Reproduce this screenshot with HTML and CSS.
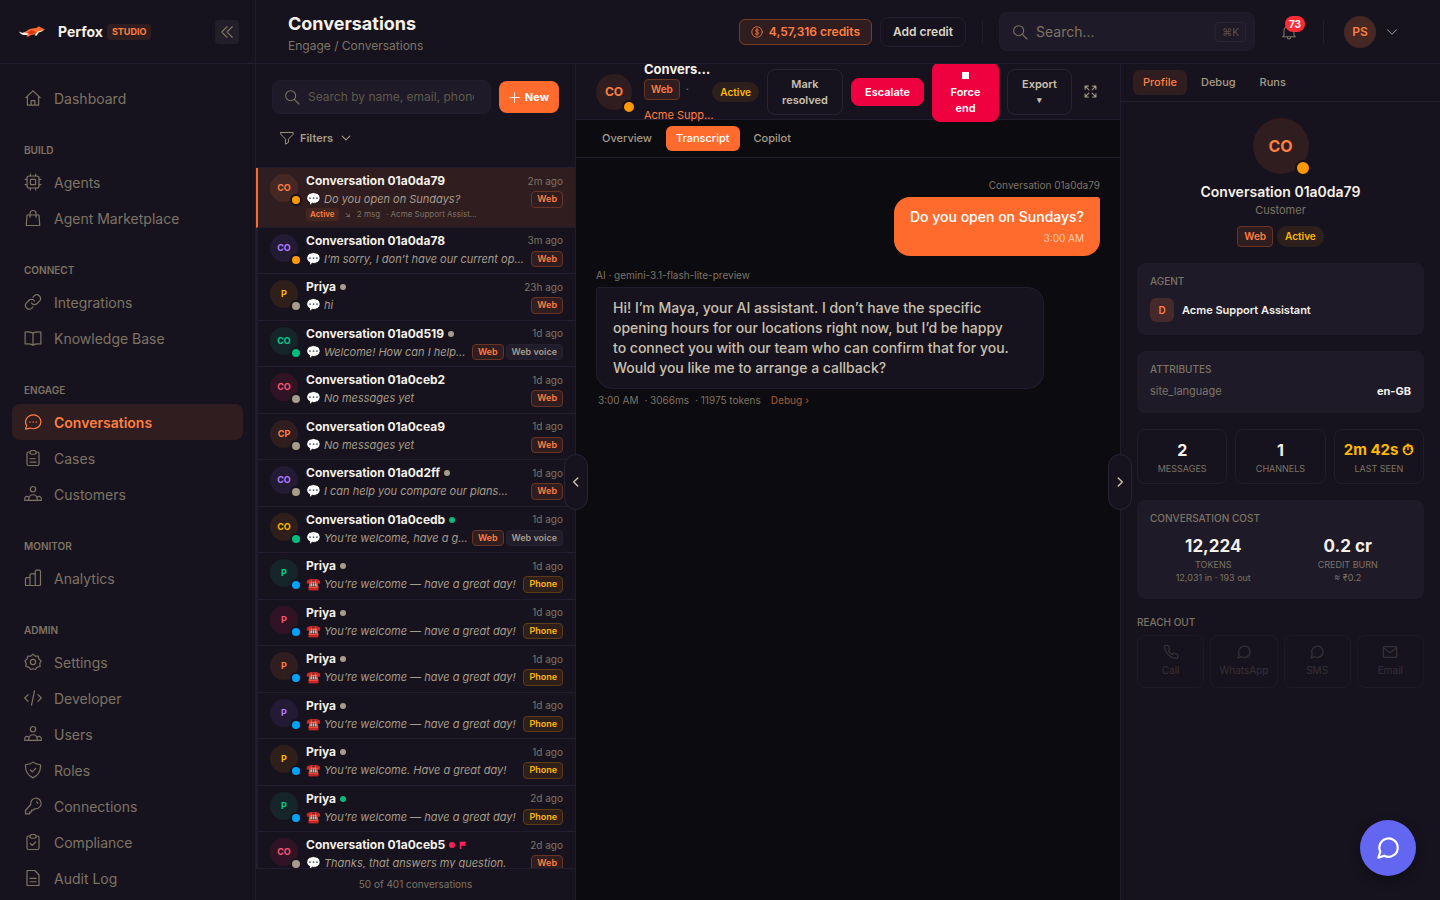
FILE: index.html
```html
<!DOCTYPE html>
<html lang="en">
<head>
    <meta charset="UTF-8">
    <meta name="viewport" content="width=device-width, initial-scale=1.0">
    <title>Conversations - Perfox Studio</title>
    <link rel="stylesheet" href="styles.css">
</head>
<body>
    <!-- Icon set -->
    <svg class="sprite" aria-hidden="true">
        <symbol id="i-home" viewBox="0 0 24 24"><path d="M2.5 11.5 12 2.5l9.500 9M4.500 10v11.500h15V10M9.500 21.500V15.500h5v6"/></symbol>
        <symbol id="i-chip" viewBox="0 0 24 24"><rect x="4" y="4" width="16" height="16" rx="3"/><rect x="8.500" y="8.500" width="7" height="7" rx="1"/><path d="M8.500 4V1.500M15.500 4V1.500M8.500 22.500V20M15.500 22.500V20M4 8.500H1.500M4 15.500H1.500M22.500 8.500H20M22.500 15.500H20"/></symbol>
        <symbol id="i-bag" viewBox="0 0 24 24"><path d="M4 8h16l1 14H3zM8 11V6a4 4 0 0 1 8 0v5"/></symbol>
        <symbol id="i-link" viewBox="0 0 24 24"><path d="M10 13.500a5 5 0 0 0 7.500.5l3.500-3.500a5 5 0 0 0-7-7L12 5.500M14 10.500a5 5 0 0 0-7.500-.5L3 13.500a5 5 0 0 0 7 7l2-2"/></symbol>
        <symbol id="i-book" viewBox="0 0 24 24"><path d="M12 5.500C9.500 4 5.500 3.500 1.500 4v16c4-.5 8 0 10.500 1.500 2.500-1.500 6.500-2 10.500-1.500V4c-4-.5-8 0-10.500 1.500zM12 5.500v16"/></symbol>
        <symbol id="i-chat-dots" viewBox="0 0 24 24"><path d="M12.500 2.500c5.500 0 10 4 10 9.300s-4.500 9.200-10 9.200c-1.500 0-2.900-.3-4.200-.9L2 21.500l1.500-4.700A9 9 0 0 1 2 11.800c0-5.300 5-9.300 10.500-9.300z"/><path d="M7.500 12h1M11.800 12h1M16 12h1"/></symbol>
        <symbol id="i-clip" viewBox="0 0 24 24"><path d="M8 4H6a2 2 0 0 0-2 2v14a2 2 0 0 0 2 2h12a2 2 0 0 0 2-2V6a2 2 0 0 0-2-2h-2M8 3.500 10 2h4l2 1.500V6l-2 1h-4L8 6zM8 13h7M8 17.500h8"/></symbol>
        <symbol id="i-clip-check" viewBox="0 0 24 24"><path d="M8 4H6a2 2 0 0 0-2 2v14a2 2 0 0 0 2 2h12a2 2 0 0 0 2-2V6a2 2 0 0 0-2-2h-2M8 3.500 10 2h4l2 1.500V6l-2 1h-4L8 6zM8.500 14l2.500 2.500 4.500-4.500"/></symbol>
        <symbol id="i-users" viewBox="0 0 24 24"><circle cx="12" cy="5.500" r="3.500"/><path d="M6.500 20.500v-2a5.500 5.500 0 0 1 11 0v2M1 20.500h22v-2.500a3 3 0 0 0-5.800-1M1 20.500V18a3 3 0 0 1 5.800-1"/></symbol>
        <symbol id="i-bars" viewBox="0 0 24 24"><path d="M2 22V12.500l1-1h5V22zM8 22V7.500l1-1h6V22zM15 22V3l1-1.500h5l1 1.500v18l-1 1z"/></symbol>
        <symbol id="i-gear" viewBox="0 0 24 24"><path d="m12 1.500 3 2.700 4-.2.800 4 3 2.500-1.800 3.500.5 4-4 .8L15 22l-3-1-3 1-2.500-3.200-4-.8.500-4L1.200 10.500l3-2.500.8-4 4 .2z"/><circle cx="12" cy="12" r="3.500"/></symbol>
        <symbol id="i-code" viewBox="0 0 24 24"><path d="m5.500 7.500-4.500 4.500 4.500 4.500M18.500 7.500 23 12l-4.500 4.500M14 2.500l-4 19"/></symbol>
        <symbol id="i-shield" viewBox="0 0 24 24"><path d="M12 1.500c3 2.300 6 3.300 10 3.500.5 8-2.500 14-10 17.500C4.500 19 1.500 13 2 5c4-.2 7-1.200 10-3.500zM8.500 12l2.500 2.500 4.500-4.500"/></symbol>
        <symbol id="i-key" viewBox="0 0 24 24"><path d="M9 10a7 7 0 1 1 5.500 5.500L12.500 17.500h-2.500V20H7.500v2.500H2V18zM16.500 6.500c1.200.2 1.800.8 2 2"/></symbol>
        <symbol id="i-doc" viewBox="0 0 24 24"><path d="M4 2h10.500l5.500 6v14H4zM8 12.500h8M8 17h8"/></symbol>
        <symbol id="i-collapse" viewBox="0 0 24 24"><path d="m12 3-9 9 9 9M21 3l-9 9 9 9"/></symbol>
        <symbol id="i-search" viewBox="0 0 24 24"><circle cx="10" cy="10" r="7.500"/><path d="m15.500 15.500 7 7"/></symbol>
        <symbol id="i-filter" viewBox="0 0 24 24"><path d="M1.500 2.500h21v3L14.500 14v5.500l-5 3V14L1.500 5.500z"/></symbol>
        <symbol id="i-down" viewBox="0 0 24 24"><path d="m3 7.500 9 9 9-9"/></symbol>
        <symbol id="i-left" viewBox="0 0 24 24"><path d="m15 5-7 7 7 7"/></symbol>
        <symbol id="i-right" viewBox="0 0 24 24"><path d="m9 5 7 7-7 7"/></symbol>
        <symbol id="i-plus" viewBox="0 0 24 24"><path d="M12 1.500v21M1.500 12h21"/></symbol>
        <symbol id="i-coin" viewBox="0 0 24 24"><circle cx="12" cy="12" r="10.500"/><path d="M15.500 8.500c-1-1.500-6.500-2-6.500 1s6.500 2 6.500 5-5.500 2.500-7 1M12 5v14"/></symbol>
        <symbol id="i-bell" viewBox="0 0 24 24"><path d="M4.500 17.500V10a7.500 7.500 0 0 1 15 0v7.500l2 1.500h-19zM9.500 19.500c0 4 5 4 5 0"/></symbol>
        <symbol id="i-expand" viewBox="0 0 24 24"><path d="M2 8V2h6M2 2l7 7M16 2h6v6M22 2l-7 7M2 16v6h6M2 22l7-7M22 16v6h-6M22 22l-7-7"/></symbol>
        <symbol id="i-chat" viewBox="0 0 24 24"><path d="M21 11.500a8.500 8.500 0 0 1-12.500 7.600L3 21l1.900-5.500A8.500 8.500 0 1 1 21 11.500z"/></symbol>
        <symbol id="i-phone" viewBox="0 0 24 24"><path d="M22 16.900v3a2 2 0 0 1-2.200 2A19.800 19.800 0 0 1 2.100 4.200 2 2 0 0 1 4.100 2h3a2 2 0 0 1 2 1.700c.1 1 .4 1.900.7 2.800a2 2 0 0 1-.5 2.100L8.100 9.900a16 16 0 0 0 6 6l1.300-1.300a2 2 0 0 1 2.100-.4c.9.300 1.800.6 2.800.7a2 2 0 0 1 1.700 2z"/></symbol>
        <symbol id="i-mail" viewBox="0 0 24 24"><rect x="2" y="4" width="20" height="16" rx="2"/><path d="m2.500 6 9.500 7 9.500-7"/></symbol>
        <symbol id="i-flag" viewBox="0 0 10 10"><path d="M1 1h8L7.500 3.500 9 6H3v4H1z" fill="currentColor" stroke="none"/></symbol>
    </svg>

    <div class="app">
        <aside class="sidebar">
            <div class="brand">
                <svg class="logo" viewBox="0 0 26 10" aria-hidden="true">
                    <path d="M0 5c2 1.500 4 1.300 6 .4L9 4l3 2-3 2.200C5 9 1 8 0 5z" fill="#f3ece2"/>
                    <path d="M5 6c3-1 4-3.500 8-3.800 3 0 5-1 6-2.200l1.500 1L25 3l-2.500 1.300L19 5c-2 2-3 2.500-5 3l-3 .500L9 10l-2-.5L9 7z" fill="#ff6b2c"/>
                    <path d="m8 6 4-2.500L17 6l-6 2z" fill="#d63a16"/>
                    <path d="m18 5 6-1.500L22 5l-3 1-2 3-2-.5z" fill="#f3ece2"/>
                </svg>
                <span class="brand-name">Perfox</span>
                <span class="brand-badge">STUDIO</span>
                <button class="collapse" aria-label="Collapse sidebar"><svg class="icon"><use href="#i-collapse"/></svg></button>
            </div>
            <nav class="nav">
                <a href="#" class="nav-item"><svg class="icon"><use href="#i-home"/></svg>Dashboard</a>
                <h2 class="nav-label">Build</h2>
                <a href="#" class="nav-item"><svg class="icon"><use href="#i-chip"/></svg>Agents</a>
                <a href="#" class="nav-item"><svg class="icon"><use href="#i-bag"/></svg>Agent Marketplace</a>
                <h2 class="nav-label">Connect</h2>
                <a href="#" class="nav-item"><svg class="icon"><use href="#i-link"/></svg>Integrations</a>
                <a href="#" class="nav-item"><svg class="icon"><use href="#i-book"/></svg>Knowledge Base</a>
                <h2 class="nav-label">Engage</h2>
                <a href="#" class="nav-item active"><svg class="icon"><use href="#i-chat-dots"/></svg>Conversations</a>
                <a href="#" class="nav-item"><svg class="icon"><use href="#i-clip"/></svg>Cases</a>
                <a href="#" class="nav-item"><svg class="icon"><use href="#i-users"/></svg>Customers</a>
                <h2 class="nav-label">Monitor</h2>
                <a href="#" class="nav-item"><svg class="icon"><use href="#i-bars"/></svg>Analytics</a>
                <h2 class="nav-label">Admin</h2>
                <a href="#" class="nav-item"><svg class="icon"><use href="#i-gear"/></svg>Settings</a>
                <a href="#" class="nav-item"><svg class="icon"><use href="#i-code"/></svg>Developer</a>
                <a href="#" class="nav-item"><svg class="icon"><use href="#i-users"/></svg>Users</a>
                <a href="#" class="nav-item"><svg class="icon"><use href="#i-shield"/></svg>Roles</a>
                <a href="#" class="nav-item"><svg class="icon"><use href="#i-key"/></svg>Connections</a>
                <a href="#" class="nav-item"><svg class="icon"><use href="#i-clip-check"/></svg>Compliance</a>
                <a href="#" class="nav-item"><svg class="icon"><use href="#i-doc"/></svg>Audit Log</a>
            </nav>
        </aside>

        <div class="main">
            <header class="topbar">
                <div class="page-title">
                    <h1>Conversations</h1>
                    <p>Engage / Conversations</p>
                </div>
                <a href="#" class="credits"><svg class="icon"><use href="#i-coin"/></svg>4,57,316 credits</a>
                <button class="add-credit">Add credit</button>
                <span class="divider"></span>
                <label class="top-search">
                    <svg class="icon"><use href="#i-search"/></svg>
                    <input type="text" placeholder="Search..." aria-label="Search">
                    <kbd>⌘K</kbd>
                </label>
                <button class="bell" aria-label="Notifications"><svg class="icon"><use href="#i-bell"/></svg><span class="bell-count">73</span></button>
                <span class="divider"></span>
                <button class="account" aria-label="Account"><span class="account-avatar">PS</span><svg class="icon"><use href="#i-down"/></svg></button>
            </header>

            <div class="workspace">
                <!-- Conversation list -->
                <section class="list-panel">
                    <div class="list-tools">
                        <label class="list-search">
                            <svg class="icon"><use href="#i-search"/></svg>
                            <input type="text" placeholder="Search by name, email, phone" aria-label="Search conversations">
                        </label>
                        <button class="new-btn"><svg class="icon"><use href="#i-plus"/></svg>New</button>
                    </div>
                    <button class="filters"><svg class="icon"><use href="#i-filter"/></svg>Filters<svg class="icon small"><use href="#i-down"/></svg></button>

                    <div class="conv-list">
                        <article class="conv selected">
                            <div class="avatar orange">CO<i class="status amber"></i></div>
                            <div class="conv-body">
                                <div class="conv-top"><b>Conversation 01a0da79</b><time>2m ago</time></div>
                                <div class="conv-bottom"><span class="emoji">💬</span><em>Do you open on Sundays?</em><span class="tag">Web</span></div>
                                <div class="conv-meta"><span class="mini-tag">Active</span><span>↘</span><span>2 msg</span><span>· Acme Support Assist…</span></div>
                            </div>
                        </article>
                        <article class="conv">
                            <div class="avatar purple">CO<i class="status amber"></i></div>
                            <div class="conv-body">
                                <div class="conv-top"><b>Conversation 01a0da78</b><time>3m ago</time></div>
                                <div class="conv-bottom"><span class="emoji">💬</span><em>I’m sorry, I don’t have our current op…</em><span class="tag">Web</span></div>
                            </div>
                        </article>
                        <article class="conv">
                            <div class="avatar yellow">P<i class="status gray"></i></div>
                            <div class="conv-body">
                                <div class="conv-top"><b>Priya</b><i class="dot gray"></i><time>23h ago</time></div>
                                <div class="conv-bottom"><span class="emoji">💬</span><em>hi</em><span class="tag">Web</span></div>
                            </div>
                        </article>
                        <article class="conv">
                            <div class="avatar green">CO<i class="status emerald"></i></div>
                            <div class="conv-body">
                                <div class="conv-top"><b>Conversation 01a0d519</b><i class="dot gray"></i><time>1d ago</time></div>
                                <div class="conv-bottom"><span class="emoji">💬</span><em>Welcome! How can I help…</em><span class="tag">Web</span><span class="tag voice">Web voice</span></div>
                            </div>
                        </article>
                        <article class="conv">
                            <div class="avatar rose">CO<i class="status gray"></i></div>
                            <div class="conv-body">
                                <div class="conv-top"><b>Conversation 01a0ceb2</b><time>1d ago</time></div>
                                <div class="conv-bottom"><span class="emoji">💬</span><em>No messages yet</em><span class="tag">Web</span></div>
                            </div>
                        </article>
                        <article class="conv">
                            <div class="avatar orange">CP<i class="status gray"></i></div>
                            <div class="conv-body">
                                <div class="conv-top"><b>Conversation 01a0cea9</b><time>1d ago</time></div>
                                <div class="conv-bottom"><span class="emoji">💬</span><em>No messages yet</em><span class="tag">Web</span></div>
                            </div>
                        </article>
                        <article class="conv">
                            <div class="avatar purple">CO<i class="status gray"></i></div>
                            <div class="conv-body">
                                <div class="conv-top"><b>Conversation 01a0d2ff</b><i class="dot gray"></i><time>1d ago</time></div>
                                <div class="conv-bottom"><span class="emoji">💬</span><em>I can help you compare our plans…</em><span class="tag">Web</span></div>
                            </div>
                        </article>
                        <article class="conv">
                            <div class="avatar yellow">CO<i class="status emerald"></i></div>
                            <div class="conv-body">
                                <div class="conv-top"><b>Conversation 01a0cedb</b><i class="dot emerald"></i><time>1d ago</time></div>
                                <div class="conv-bottom"><span class="emoji">💬</span><em>You’re welcome, have a g…</em><span class="tag">Web</span><span class="tag voice">Web voice</span></div>
                            </div>
                        </article>
                        <article class="conv">
                            <div class="avatar green">P<i class="status blue"></i></div>
                            <div class="conv-body">
                                <div class="conv-top"><b>Priya</b><i class="dot gray"></i><time>1d ago</time></div>
                                <div class="conv-bottom"><span class="emoji">☎️</span><em>You’re welcome — have a great day!</em><span class="tag phone">Phone</span></div>
                            </div>
                        </article>
                        <article class="conv">
                            <div class="avatar rose">P<i class="status blue"></i></div>
                            <div class="conv-body">
                                <div class="conv-top"><b>Priya</b><i class="dot gray"></i><time>1d ago</time></div>
                                <div class="conv-bottom"><span class="emoji">☎️</span><em>You’re welcome — have a great day!</em><span class="tag phone">Phone</span></div>
                            </div>
                        </article>
                        <article class="conv">
                            <div class="avatar orange">P<i class="status blue"></i></div>
                            <div class="conv-body">
                                <div class="conv-top"><b>Priya</b><i class="dot gray"></i><time>1d ago</time></div>
                                <div class="conv-bottom"><span class="emoji">☎️</span><em>You’re welcome — have a great day!</em><span class="tag phone">Phone</span></div>
                            </div>
                        </article>
                        <article class="conv">
                            <div class="avatar purple">P<i class="status blue"></i></div>
                            <div class="conv-body">
                                <div class="conv-top"><b>Priya</b><i class="dot gray"></i><time>1d ago</time></div>
                                <div class="conv-bottom"><span class="emoji">☎️</span><em>You’re welcome — have a great day!</em><span class="tag phone">Phone</span></div>
                            </div>
                        </article>
                        <article class="conv">
                            <div class="avatar yellow">P<i class="status blue"></i></div>
                            <div class="conv-body">
                                <div class="conv-top"><b>Priya</b><i class="dot gray"></i><time>1d ago</time></div>
                                <div class="conv-bottom"><span class="emoji">☎️</span><em>You’re welcome. Have a great day!</em><span class="tag phone">Phone</span></div>
                            </div>
                        </article>
                        <article class="conv">
                            <div class="avatar green">P<i class="status blue"></i></div>
                            <div class="conv-body">
                                <div class="conv-top"><b>Priya</b><i class="dot emerald"></i><time>2d ago</time></div>
                                <div class="conv-bottom"><span class="emoji">☎️</span><em>You’re welcome — have a great day!</em><span class="tag phone">Phone</span></div>
                            </div>
                        </article>
                        <article class="conv">
                            <div class="avatar rose">CO<i class="status gray"></i></div>
                            <div class="conv-body">
                                <div class="conv-top"><b>Conversation 01a0ceb5</b><i class="dot red"></i><svg class="flag"><use href="#i-flag"/></svg><time>2d ago</time></div>
                                <div class="conv-bottom"><span class="emoji">💬</span><em>Thanks, that answers my question.</em><span class="tag">Web</span></div>
                            </div>
                        </article>
                    </div>
                    <p class="list-count">50 of 401 conversations</p>
                    <button class="handle" aria-label="Hide list"><svg class="icon"><use href="#i-left"/></svg></button>
                </section>

                <!-- Chat -->
                <section class="chat">
                    <div class="chat-head">
                        <div class="avatar orange large">CO<i class="status amber"></i></div>
                        <div class="chat-who">
                            <b>Convers…</b>
                            <div class="chat-sub"><span class="tag big">Web</span><span class="sep">·</span><a href="#">Acme Supp…</a></div>
                        </div>
                        <span class="pill">Active</span>
                        <button class="btn resolve">Mark resolved</button>
                        <button class="btn danger">Escalate</button>
                        <button class="btn danger force"><span class="stop"></span>Force end</button>
                        <button class="btn export">Export <small>▾</small></button>
                        <button class="expand" aria-label="Full screen"><svg class="icon"><use href="#i-expand"/></svg></button>
                    </div>
                    <div class="tabs chat-tabs">
                        <button>Overview</button>
                        <button class="on">Transcript</button>
                        <button>Copilot</button>
                    </div>
                    <div class="messages">
                        <p class="msg-label right">Conversation 01a0da79</p>
                        <div class="bubble user">
                            <p>Do you open on Sundays?</p>
                            <time>3:00 AM</time>
                        </div>
                        <p class="msg-label next">AI · gemini-3.1-flash-lite-preview</p>
                        <div class="bubble ai">
                            <p>Hi! I’m Maya, your AI assistant. I don’t have the specific<br>opening hours for our locations right now, but I’d be happy<br>to connect you with our team who can confirm that for you.<br>Would you like me to arrange a callback?</p>
                        </div>
                        <div class="msg-meta"><span>3:00 AM</span><span>· 3066ms</span><span>· 11975 tokens</span><a href="#">Debug ›</a></div>
                    </div>
                </section>

                <!-- Customer details -->
                <aside class="details">
                    <button class="handle" aria-label="Hide details"><svg class="icon"><use href="#i-right"/></svg></button>
                    <div class="tabs detail-tabs">
                        <button class="on">Profile</button>
                        <button>Debug</button>
                        <button>Runs</button>
                    </div>
                    <div class="details-body">
                        <div class="profile">
                            <div class="avatar orange huge">CO<i class="status amber"></i></div>
                            <h3>Conversation 01a0da79</h3>
                            <p>Customer</p>
                            <div class="profile-tags"><span class="tag big">Web</span><span class="pill">Active</span></div>
                        </div>
                        <div class="card">
                            <h4>Agent</h4>
                            <div class="agent"><span class="agent-icon">D</span>Acme Support Assistant</div>
                        </div>
                        <div class="card">
                            <h4>Attributes</h4>
                            <div class="attribute"><span>site_language</span><b>en-GB</b></div>
                        </div>
                        <div class="stats">
                            <div class="stat"><b>2</b><span>Messages</span></div>
                            <div class="stat"><b>1</b><span>Channels</span></div>
                            <div class="stat"><b class="warn">2m 42s ⏱</b><span>Last seen</span></div>
                        </div>
                        <div class="card">
                            <h4>Conversation cost</h4>
                            <div class="costs">
                                <div class="cost"><b>12,224</b><span>TOKENS</span><span>12,031 in · 193 out</span></div>
                                <div class="cost"><b>0.2 cr</b><span>CREDIT BURN</span><span>≈ ₹0.2</span></div>
                            </div>
                        </div>
                        <div>
                            <h4>Reach out</h4>
                            <div class="reach">
                                <button disabled><svg class="icon"><use href="#i-phone"/></svg>Call</button>
                                <button disabled><svg class="icon"><use href="#i-chat"/></svg>WhatsApp</button>
                                <button disabled><svg class="icon"><use href="#i-chat"/></svg>SMS</button>
                                <button disabled><svg class="icon"><use href="#i-mail"/></svg>Email</button>
                            </div>
                        </div>
                    </div>
                </aside>
            </div>
        </div>
    </div>
    <button class="fab" aria-label="Open chat"><svg class="icon"><use href="#i-chat"/></svg></button>
</body>
</html>
```

FILE: styles.css
```css
:root {
    --bg: #0c0b10;
    --panel: #17131e;
    --card: #1e1a28;
    --line: #221d2e;
    --text: #f5f1e8;
    --soft: #c9c0ae;
    --mid: #a69c8a;
    --muted: #7d7464;
    --orange: #ff6b2c;
    --orange-text: #ff7f40;
    --orange-bg: #2f1d20;
    --amber: #ff9900;
    --yellow: #ffb900;
    --red: #ef003f;
}
* {
    box-sizing: border-box;
    margin: 0;
    padding: 0;
}
body {
    font-family: Inter, "Noto Sans", sans-serif;
    font-size: 14px;
    line-height: 1.5;
    background: var(--bg);
    color: var(--text);
    overflow: hidden;
}
button, input {
    font: inherit;
    color: inherit;
    border: 0;
    background: none;
}
button {
    cursor: pointer;
}
a {
    color: inherit;
    text-decoration: none;
}
input {
    min-width: 0;
    flex: 1;
    outline: none;
}
.sprite {
    display: none;
}
.icon {
    width: 16px;
    height: 16px;
    flex-shrink: 0;
    fill: none;
    stroke: currentColor;
    stroke-width: 1.6;
    stroke-linecap: round;
    stroke-linejoin: round;
}
.app {
    display: flex;
    height: 100vh;
}

/* Sidebar */
.sidebar {
    width: 256px;
    flex-shrink: 0;
    display: flex;
    flex-direction: column;
    background: var(--panel);
    border-right: 1px solid var(--line);
}
.brand {
    height: 64px;
    flex-shrink: 0;
    display: flex;
    align-items: center;
    padding: 0 16px 0 19px;
    border-bottom: 1px solid var(--line);
}
.logo {
    width: 27px;
    height: 11px;
    margin-right: 12px;
}
.brand-name {
    font-size: 14px;
    font-weight: 700;
}
.brand-badge {
    margin-left: 4px;
    padding: 0 5px;
    font-size: 9px;
    line-height: 16px;
    font-weight: 700;
    color: var(--orange-text);
    background: var(--orange-bg);
    border-radius: 4px;
}
.collapse {
    width: 24px;
    height: 24px;
    margin-left: auto;
    display: grid;
    place-items: center;
    color: var(--muted);
    background: #221e2a;
    border-radius: 4px;
}
.collapse .icon {
    width: 14px;
    height: 14px;
    stroke-width: 2;
}
.nav {
    padding: 16px 12px;
    overflow: hidden;
}
.nav-item {
    display: flex;
    align-items: center;
    gap: 12px;
    height: 36px;
    padding: 0 12px;
    color: var(--muted);
    border-radius: 8px;
}
.nav-item .icon {
    width: 18px;
    height: 18px;
}
.nav-item.active {
    color: var(--orange-text);
    background: var(--orange-bg);
    font-weight: 600;
}
.nav-label {
    margin: 24px 12px 4px;
    font-size: 10px;
    line-height: 20px;
    font-weight: 600;
    text-transform: uppercase;
    color: var(--muted);
}

/* Top bar */
.main {
    flex: 1;
    min-width: 0;
    display: flex;
    flex-direction: column;
}
.topbar {
    height: 64px;
    flex-shrink: 0;
    display: flex;
    align-items: center;
    padding: 0 42px 0 32px;
    background: var(--panel);
    border-bottom: 1px solid var(--line);
}
.page-title {
    margin-right: auto;
    padding-top: 4px;
}
.page-title h1 {
    font-size: 18px;
    line-height: 24px;
    font-weight: 700;
}
.page-title p {
    font-size: 12px;
    line-height: 20px;
    color: var(--muted);
}
.credits {
    display: flex;
    align-items: center;
    gap: 6px;
    height: 26px;
    padding: 0 11px;
    margin-right: 8px;
    font-size: 12px;
    font-weight: 600;
    color: var(--orange-text);
    background: var(--orange-bg);
    border: 1px solid #7a3c24;
    border-radius: 6px;
}
.credits .icon {
    width: 12px;
    height: 12px;
}
.add-credit {
    height: 30px;
    padding: 0 12px;
    font-size: 12px;
    font-weight: 600;
    color: #ddd5c6;
    border: 1px solid var(--line);
    border-radius: 8px;
}
.divider {
    width: 1px;
    height: 24px;
    margin: 0 16px;
    background: var(--line);
}
.top-search {
    width: 256px;
    height: 39px;
    display: flex;
    align-items: center;
    gap: 8px;
    padding: 0 8px 0 12px;
    background: var(--card);
    border: 1px solid var(--line);
    border-radius: 8px;
    color: var(--muted);
}
.top-search input::placeholder {
    color: var(--muted);
}
.top-search kbd {
    padding: 0 6px;
    font-family: inherit;
    font-size: 10px;
    line-height: 18px;
    color: #5a5348;
    border: 1px solid #2a2436;
    border-radius: 4px;
}
.bell {
    position: relative;
    width: 36px;
    height: 36px;
    margin-left: 16px;
    display: grid;
    place-items: center;
    color: var(--muted);
}
.bell-count {
    position: absolute;
    top: 2px;
    right: 2px;
    padding: 0 4px;
    font-size: 10px;
    line-height: 16px;
    font-weight: 700;
    color: #fff;
    background: #fb2c36;
    border-radius: 8px;
}
.account {
    display: flex;
    align-items: center;
    gap: 10px;
    margin-left: 4px;
    color: var(--mid);
}
.account .icon {
    width: 12px;
    height: 12px;
    stroke-width: 2;
}
.account-avatar {
    width: 32px;
    height: 32px;
    font-size: 12px;
    line-height: 32px;
    font-weight: 600;
    text-align: center;
    color: var(--orange-text);
    background: #452823;
    border-radius: 50%;
}

/* Shared bits */
.workspace {
    flex: 1;
    min-height: 0;
    display: grid;
    grid-template-columns: 320px minmax(0, 1fr) 320px;
}
.avatar {
    position: relative;
    width: 28px;
    height: 28px;
    flex-shrink: 0;
    display: grid;
    place-items: center;
    font-size: 9px;
    font-weight: 700;
    border-radius: 50%;
}
.avatar.orange { color: var(--orange-text); background: var(--orange-bg); }
.avatar.purple { color: #b57bff; background: #231a34; }
.avatar.yellow { color: var(--yellow); background: #2f1f1b; }
.avatar.green { color: #00cf8f; background: #152529; }
.avatar.rose { color: #ff5577; background: #301424; }
.status {
    position: absolute;
    right: -4px;
    bottom: -4px;
    width: 12px;
    height: 12px;
    border: 2px solid var(--panel);
    border-radius: 50%;
}
.dot {
    width: 6px;
    height: 6px;
    flex-shrink: 0;
    border-radius: 50%;
}
.status.amber { background: var(--amber); }
.status.gray, .dot.gray { background: var(--mid); }
.status.emerald, .dot.emerald { background: #00bc7d; }
.status.blue { background: #00a2ff; }
.dot.red { background: #ff2056; }
.avatar.large {
    width: 36px;
    height: 36px;
    font-size: 12px;
}
.avatar.large .status {
    width: 14px;
    height: 14px;
}
.avatar.huge {
    width: 56px;
    height: 56px;
    font-size: 16px;
}
.avatar.huge .status {
    right: -2px;
    bottom: -2px;
    width: 16px;
    height: 16px;
}
.tag {
    flex-shrink: 0;
    padding: 0 5px;
    font-size: 9px;
    line-height: 14px;
    font-weight: 600;
    color: var(--orange-text);
    background: var(--orange-bg);
    border: 1px solid #693423;
    border-radius: 4px;
}
.tag.voice {
    color: var(--mid);
    background: #211d2a;
    border-color: #262131;
}
.tag.phone {
    color: var(--yellow);
    background: #2f1f1b;
    border-color: #5e3b15;
}
.tag.big {
    padding: 0 6px;
    font-size: 10px;
    line-height: 19px;
}
.pill {
    flex-shrink: 0;
    padding: 0 8px;
    font-size: 10px;
    line-height: 20px;
    font-weight: 600;
    color: var(--yellow);
    background: #2d1f1b;
    border-radius: 10px;
}
.tabs {
    display: flex;
    align-items: center;
    gap: 4px;
    height: 38px;
    border-bottom: 1px solid var(--line);
}
.tabs button {
    height: 25px;
    padding: 0 10px;
    font-size: 11px;
    font-weight: 500;
    color: var(--mid);
    border-radius: 6px;
}
.handle {
    position: absolute;
    top: 390px;
    z-index: 2;
    width: 24px;
    height: 56px;
    display: grid;
    place-items: center;
    color: var(--soft);
    background: var(--panel);
    border: 1px solid #282236;
    border-radius: 12px;
}
.handle .icon {
    width: 14px;
    height: 14px;
    stroke-width: 2.5;
}

/* Conversation list */
.list-panel {
    position: relative;
    min-height: 0;
    display: flex;
    flex-direction: column;
    background: var(--panel);
    border-right: 1px solid var(--line);
}
.list-panel .handle {
    right: -13px;
}
.list-tools {
    display: flex;
    align-items: center;
    gap: 8px;
    padding: 16px 16px 0;
}
.list-search {
    flex: 1;
    min-width: 0;
    height: 34px;
    display: flex;
    align-items: center;
    gap: 8px;
    padding: 0 16px 0 11px;
    font-size: 12px;
    color: var(--muted);
    background: var(--card);
    border: 1px solid var(--line);
    border-radius: 8px;
}
.list-search input::placeholder {
    color: #5f584c;
}
.new-btn {
    height: 32px;
    display: flex;
    align-items: center;
    gap: 5px;
    padding: 0 10px;
    font-size: 11px;
    font-weight: 700;
    color: #fff;
    background: var(--orange);
    border-radius: 8px;
}
.new-btn .icon {
    width: 11px;
    height: 11px;
    stroke-width: 2;
}
.filters {
    align-self: flex-start;
    display: flex;
    align-items: center;
    gap: 6px;
    height: 24px;
    margin: 12px 24px 17px;
    font-size: 11px;
    font-weight: 600;
    color: var(--mid);
}
.filters .icon {
    width: 14px;
    height: 14px;
}
.filters .icon.small {
    width: 10px;
    height: 10px;
    margin-left: 2px;
    stroke-width: 2.5;
}
.conv-list {
    flex: 1;
    min-height: 0;
    overflow: hidden;
    border-top: 1px solid var(--line);
}
.conv {
    display: flex;
    gap: 8px;
    padding: 4px 12px 6px;
    border-left: 2px solid var(--line);
    border-bottom: 1px solid var(--line);
}
.conv.selected {
    background: var(--orange-bg);
    border-left-color: var(--orange);
}
.conv.selected .avatar {
    background: #452823;
}
.conv .avatar {
    margin-top: 2px;
}
.conv-body {
    flex: 1;
    min-width: 0;
}
.conv-top {
    display: flex;
    align-items: center;
    gap: 4px;
    font-size: 12px;
}
.conv-top time {
    margin-left: auto;
    font-size: 10px;
    line-height: 15px;
    color: var(--muted);
}
.flag {
    width: 8px;
    height: 8px;
    color: #ff2056;
}
.conv-bottom {
    display: flex;
    gap: 2px;
    margin-top: 1px;
    font-size: 11px;
}
.conv-bottom em {
    flex: 1;
    min-width: 0;
    overflow: hidden;
    white-space: nowrap;
    text-overflow: ellipsis;
    color: var(--mid);
}
.emoji {
    width: 16px;
    flex-shrink: 0;
    font-size: 12px;
    line-height: 16px;
}
.conv-meta {
    display: flex;
    gap: 6px;
    font-size: 8px;
    line-height: 13px;
    color: var(--muted);
}
.mini-tag {
    padding: 0 4px;
    font-weight: 600;
    color: var(--orange-text);
    background: #45251f;
    border-radius: 3px;
}
.list-count {
    height: 32px;
    font-size: 10px;
    line-height: 31px;
    text-align: center;
    color: var(--muted);
    border-top: 1px solid var(--line);
}

/* Chat */
.chat {
    min-width: 0;
    overflow: hidden;
}
.chat-head {
    position: relative;
    height: 56px;
    display: flex;
    align-items: center;
    gap: 8px;
    padding: 0 16px 0 20px;
    background: var(--panel);
    border-bottom: 1px solid var(--line);
}
.chat-who {
    flex: 1;
    min-width: 0;
    margin-left: 4px;
}
.chat-who b {
    display: block;
    font-size: 13px;
    line-height: 20px;
}
.chat-sub {
    display: flex;
    flex-wrap: wrap;
    align-items: center;
    column-gap: 6px;
    row-gap: 6px;
    font-size: 11px;
    color: var(--orange-text);
}
.chat-sub a {
    line-height: 18px;
    white-space: nowrap;
}
.chat-sub .sep {
    color: var(--muted);
}
.btn {
    flex-shrink: 0;
    padding: 6px 12px;
    font-size: 11px;
    line-height: 16px;
    font-weight: 600;
    border: 1px solid #282236;
    border-radius: 8px;
    color: var(--soft);
}
.btn.resolve {
    width: 76px;
}
.btn.danger {
    color: #fff;
    background: var(--red);
    border-color: var(--red);
    padding: 5px 13px;
}
.btn.force {
    width: 67px;
}
.btn.export {
    width: 65px;
}
.btn small {
    display: block;
    font-size: 9px;
}
.stop {
    display: block;
    width: 7px;
    height: 7px;
    margin: 4px auto 5px;
    background: #fff;
}
.expand {
    width: 28px;
    height: 28px;
    display: grid;
    place-items: center;
    margin-left: -4px;
    color: var(--mid);
}
.expand .icon {
    width: 13px;
    height: 13px;
    stroke-width: 2;
}
.chat-tabs {
    padding: 0 16px;
}
.chat-tabs .on {
    color: #fff;
    background: var(--orange);
}
.messages {
    display: flex;
    flex-direction: column;
    align-items: flex-start;
    gap: 4px;
    padding: 20px;
}
.msg-label {
    font-size: 10px;
    line-height: 15px;
    color: var(--muted);
}
.msg-label.next {
    margin-top: 8px;
}
.msg-label.right, .bubble.user {
    align-self: flex-end;
}
.bubble {
    max-width: 448px;
    padding: 10px 16px;
    line-height: 20px;
    font-weight: 500;
    border-radius: 16px;
}
.bubble.user {
    color: #fff;
    background: var(--orange);
    border-top-right-radius: 3px;
}
.bubble.user time {
    display: block;
    margin-top: 4px;
    font-size: 10px;
    line-height: 15px;
    font-weight: 400;
    text-align: right;
    color: #ffc9ae;
}
.bubble.ai {
    width: 448px;
    color: var(--soft);
    background: var(--panel);
    border: 1px solid var(--line);
    border-top-left-radius: 3px;
}
.msg-meta {
    display: flex;
    gap: 6px;
    padding-left: 2px;
    font-size: 10px;
    line-height: 15px;
    color: var(--muted);
}
.msg-meta a {
    margin-left: 4px;
    font-weight: 500;
    color: #96502f;
}

/* Details */
.details {
    position: relative;
    background: var(--panel);
    border-left: 1px solid var(--line);
}
.details .handle {
    left: -13px;
}
.detail-tabs {
    padding: 0 12px;
}
.detail-tabs .on {
    color: var(--orange-text);
    background: var(--orange-bg);
}
.details-body {
    display: flex;
    flex-direction: column;
    gap: 16px;
    padding: 16px;
}
.profile {
    display: flex;
    flex-direction: column;
    align-items: center;
}
.profile h3 {
    margin-top: 8px;
    font-size: 14px;
    line-height: 20px;
    font-weight: 600;
}
.profile p {
    font-size: 11px;
    line-height: 16px;
    color: var(--muted);
}
.profile-tags {
    display: flex;
    gap: 4px;
    margin-top: 8px;
}
h4 {
    font-size: 10px;
    line-height: 15px;
    font-weight: 500;
    text-transform: uppercase;
    color: var(--muted);
}
.card {
    padding: 11px 13px 13px;
    background: var(--card);
    border-radius: 8px;
}
.agent {
    display: flex;
    align-items: center;
    gap: 8px;
    margin-top: 9px;
    font-size: 11px;
    font-weight: 600;
}
.agent-icon {
    width: 24px;
    font-size: 10px;
    line-height: 24px;
    text-align: center;
    color: var(--orange-text);
    background: #45292b;
    border-radius: 6px;
}
.attribute {
    display: flex;
    justify-content: space-between;
    margin-top: 5px;
    font-size: 11px;
    line-height: 18px;
    color: var(--muted);
}
.attribute b {
    color: var(--text);
}
.stats {
    display: grid;
    grid-template-columns: repeat(3, 1fr);
    gap: 8px;
}
.stat, .cost {
    display: flex;
    flex-direction: column;
    align-items: center;
    font-size: 9px;
    line-height: 13px;
    white-space: nowrap;
    color: var(--muted);
}
.stat {
    padding: 8px 0;
    text-transform: uppercase;
    border: 1px solid var(--line);
    border-radius: 8px;
}
.stat b, .cost b {
    font-size: 16px;
    line-height: 24px;
    color: var(--text);
}
.stat .warn {
    font-size: 15px;
    text-transform: none;
    color: var(--yellow);
}
.costs {
    display: grid;
    grid-template-columns: 1fr 1fr;
    gap: 8px;
    margin-top: 8px;
    padding-bottom: 2px;
}
.cost b {
    font-size: 17px;
}
.reach {
    display: grid;
    grid-template-columns: repeat(4, minmax(0, 1fr));
    gap: 6px;
    margin-top: 5px;
}
.reach button {
    display: flex;
    flex-direction: column;
    align-items: center;
    gap: 3px;
    padding: 8px 0 9px;
    font-size: 10px;
    line-height: 15px;
    color: var(--mid);
    border: 1px solid #3a3150;
    border-radius: 8px;
    opacity: .2;
}
.reach .icon {
    stroke-width: 2;
}
.fab {
    position: fixed;
    right: 24px;
    bottom: 24px;
    width: 56px;
    height: 56px;
    display: grid;
    place-items: center;
    color: #fff;
    background: #6366f1;
    border-radius: 50%;
    box-shadow: 0 4px 12px rgba(0, 0, 0, .4);
}
.fab .icon {
    width: 26px;
    height: 26px;
    stroke-width: 2;
}
```
